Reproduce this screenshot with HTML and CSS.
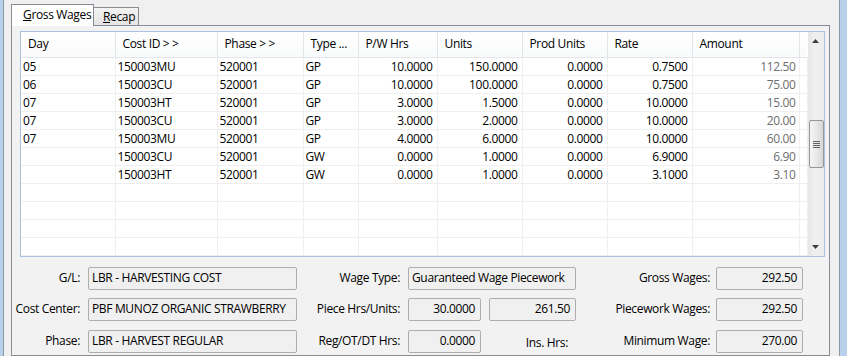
FILE: index.html
```html
<!DOCTYPE html>
<html lang="en">
<head>
  <meta charset="UTF-8" />
  <title>Gross Wages</title>
  <link rel="stylesheet" href="styles.css">
</head>
<body>
  <div class="window">
    <div class="frame-left"></div>

    <div class="client">
      <!-- tabs -->
      <div class="tabs">
        <div class="tab active"><u>G</u>ross Wages</div>
        <div class="tab"><u>R</u>ecap</div>
      </div>

      <div class="panel">
        <!-- list view -->
        <div class="grid">
          <table class="rows">
            <colgroup>
              <col class="c-day"><col class="c-cost"><col class="c-phase"><col class="c-type">
              <col class="c-hrs"><col class="c-units"><col class="c-prod"><col class="c-rate">
              <col class="c-amt"><col class="c-fill">
            </colgroup>
            <thead>
              <tr>
                <th>Day</th><th>Cost ID &gt; &gt;</th><th>Phase &gt; &gt;</th><th>Type ...</th>
                <th>P/W Hrs</th><th>Units</th><th>Prod Units</th><th>Rate</th><th>Amount</th><th class="fill"></th>
              </tr>
            </thead>
            <tbody>
              <tr><td>05</td><td>150003MU</td><td>520001</td><td>GP</td><td class="num">10.0000</td><td class="num">150.0000</td><td class="num">0.0000</td><td class="num">0.7500</td><td class="num amt">112.50</td><td></td></tr>
              <tr><td>06</td><td>150003CU</td><td>520001</td><td>GP</td><td class="num">10.0000</td><td class="num">100.0000</td><td class="num">0.0000</td><td class="num">0.7500</td><td class="num amt">75.00</td><td></td></tr>
              <tr><td>07</td><td>150003HT</td><td>520001</td><td>GP</td><td class="num">3.0000</td><td class="num">1.5000</td><td class="num">0.0000</td><td class="num">10.0000</td><td class="num amt">15.00</td><td></td></tr>
              <tr><td>07</td><td>150003CU</td><td>520001</td><td>GP</td><td class="num">3.0000</td><td class="num">2.0000</td><td class="num">0.0000</td><td class="num">10.0000</td><td class="num amt">20.00</td><td></td></tr>
              <tr><td>07</td><td>150003MU</td><td>520001</td><td>GP</td><td class="num">4.0000</td><td class="num">6.0000</td><td class="num">0.0000</td><td class="num">10.0000</td><td class="num amt">60.00</td><td></td></tr>
              <tr><td></td><td>150003CU</td><td>520001</td><td>GW</td><td class="num">0.0000</td><td class="num">1.0000</td><td class="num">0.0000</td><td class="num">6.9000</td><td class="num amt">6.90</td><td></td></tr>
              <tr><td></td><td>150003HT</td><td>520001</td><td>GW</td><td class="num">0.0000</td><td class="num">1.0000</td><td class="num">0.0000</td><td class="num">3.1000</td><td class="num amt">3.10</td><td></td></tr>
              <tr><td></td><td></td><td></td><td></td><td></td><td></td><td></td><td></td><td></td><td></td></tr>
              <tr><td></td><td></td><td></td><td></td><td></td><td></td><td></td><td></td><td></td><td></td></tr>
              <tr><td></td><td></td><td></td><td></td><td></td><td></td><td></td><td></td><td></td><td></td></tr>
              <tr><td></td><td></td><td></td><td></td><td></td><td></td><td></td><td></td><td></td><td></td></tr>
            </tbody>
          </table>

          <!-- vertical scrollbar -->
          <div class="vscroll">
            <div class="arrow">
              <svg width="7" height="4" viewBox="0 0 7 4"><polygon points="0,4 7,4 3.5,0" fill="#3c3c3c"/></svg>
            </div>
            <div class="track">
              <div class="thumb">
                <svg width="7" height="7" viewBox="0 0 7 7">
                  <rect x="0" y="0" width="7" height="1" fill="#5f5f5f"/>
                  <rect x="0" y="2" width="7" height="1" fill="#5f5f5f"/>
                  <rect x="0" y="4" width="7" height="1" fill="#5f5f5f"/>
                  <rect x="0" y="6" width="7" height="1" fill="#5f5f5f"/>
                </svg>
              </div>
            </div>
            <div class="arrow">
              <svg width="7" height="4" viewBox="0 0 7 4"><polygon points="0,0 7,0 3.5,4" fill="#3c3c3c"/></svg>
            </div>
          </div>
        </div>

        <!-- totals -->
        <div class="form">
          <div class="lbl">G/L:</div>
          <div class="field">LBR - HARVESTING COST</div>
          <div class="lbl">Wage Type:</div>
          <div class="field wide">Guaranteed Wage Piecework</div>
          <div class="lbl">Gross Wages:</div>
          <div class="field num">292.50</div>

          <div class="lbl">Cost Center:</div>
          <div class="field">PBF MUNOZ ORGANIC STRAWBERRY</div>
          <div class="lbl">Piece Hrs/Units:</div>
          <div class="field num short">30.0000</div>
          <div class="field num">261.50</div>
          <div class="lbl">Piecework Wages:</div>
          <div class="field num">292.50</div>

          <div class="lbl">Phase:</div>
          <div class="field">LBR - HARVEST REGULAR</div>
          <div class="lbl">Reg/OT/DT Hrs:</div>
          <div class="field num short">0.0000</div>
          <div class="lbl ins">Ins. Hrs:</div>
          <div class="lbl">Minimum Wage:</div>
          <div class="field num">270.00</div>
        </div>
      </div>
    </div>

    <div class="frame-right"></div>
  </div>
</body>
</html>
```

FILE: styles.css
```css
/* Reset & Basic */
* {
  box-sizing: border-box;
}
body {
  margin: 0;
  font-family: "Open Sans", "Noto Sans", sans-serif;
  font-size: 12px;
  letter-spacing: -0.35px;
  color: #000;
  background: #f0f0f0;
}

/* window frame */
.window {
  display: flex;
  width: 847px;
  height: 356px;
  overflow: hidden;
}
.frame-left {
  width: 4px;
  background: #b9d1ea;
  border-right: 1px solid #8a98a8;
}
.frame-right {
  width: 8px;
  background: #b9d1ea;
  border-left: 1px solid #8a98a8;
}
.client {
  flex: 1;
  padding: 4px 9px 0 7px;
}

/* tabs */
.tabs {
  display: flex;
  align-items: flex-end;
  height: 21px;
}
.tab {
  width: 45px;
  height: 18px;
  line-height: 18px;
  padding-left: 9px;
  border: 1px solid #898c95;
  border-bottom: none;
  border-left: none;
  background: linear-gradient(#f3f3f3, #e4e4e4);
}
.tab.active {
  position: relative;
  z-index: 1;
  width: 83px;
  height: 22px;
  margin-bottom: -1px;
  line-height: 20px;
  padding-left: 11px;
  border-left: 1px solid #898c95;
  background: #fff;
}

/* tab panel */
.panel {
  height: 331px;
  border: 1px solid #898c95;
  background: #f2f2f2;
  padding: 5px 4px 0 8px;
}

/* list view */
.grid {
  display: flex;
  width: 805px;
  border: 1px solid #a9c2e0;
  background: #fff;
}
.rows {
  width: 786px;
  table-layout: fixed;
  border-collapse: collapse;
}
.c-day { width: 94px; }
.c-cost { width: 102px; }
.c-phase { width: 86px; }
.c-type { width: 55px; }
.c-hrs { width: 79px; }
.c-units { width: 85px; }
.c-prod { width: 85px; }
.c-rate { width: 85px; }
.c-amt { width: 107px; }
.c-fill { width: 8px; }

.rows th {
  height: 25px;
  padding: 0 0 1px 7px;
  text-align: left;
  font-weight: normal;
  white-space: nowrap;
  overflow: hidden;
  background: linear-gradient(#ffffff, #f9fafb);
  border-right: 1px solid #e3e5e8;
  border-bottom: 1px solid #e3e5e8;
}
.rows th.fill {
  border-right: none;
}
.rows td {
  height: 18px;
  padding: 0 2px;
  line-height: 17px;
  white-space: nowrap;
  overflow: hidden;
  border-right: 1px solid #efefef;
  border-bottom: 1px solid #efefef;
}
.rows td.num {
  text-align: right;
  padding-right: 4px;
}
.rows td.amt {
  color: #6e6e6e;
  padding-right: 3px;
}

/* scrollbar */
.vscroll {
  width: 17px;
  display: flex;
  flex-direction: column;
  background: linear-gradient(to right, #e6e6e6, #f0f0f0 40%, #ececec);
}
.arrow {
  height: 17px;
  display: flex;
  align-items: center;
  justify-content: center;
}
.track {
  flex: 1;
  padding-top: 71px;
}
.thumb {
  width: 15px;
  height: 48px;
  margin-left: 1px;
  border: 1px solid #979797;
  border-radius: 2px;
  background: linear-gradient(to right, #f4f4f4, #e8e8e8 50%, #d6d6d6);
  display: flex;
  align-items: center;
  justify-content: center;
}

/* bottom form */
.form {
  display: grid;
  grid-template-columns: 76px 209px 111px 81px 87px 140px 87px;
  grid-template-rows: 31px 32px 23px;
  align-items: start;
  margin: 10px 0 0 -8px;
}
.lbl {
  height: 23px;
  line-height: 22px;
  text-align: right;
  padding-right: 8px;
  white-space: nowrap;
}
.lbl:nth-child(5),
.lbl:nth-child(12),
.lbl:nth-child(19) {
  padding-right: 6px;
}
.lbl.ins {
  line-height: 26px;
}
.field {
  height: 23px;
  line-height: 20px;
  padding: 0 5px 0 3px;
  border: 1px solid #adadad;
  border-radius: 2px;
  background: #f0f0f0;
  white-space: nowrap;
  overflow: hidden;
}
.field.wide {
  grid-column: span 2;
}
.field.num {
  text-align: right;
}
.field.short {
  width: 73px;
}
```
